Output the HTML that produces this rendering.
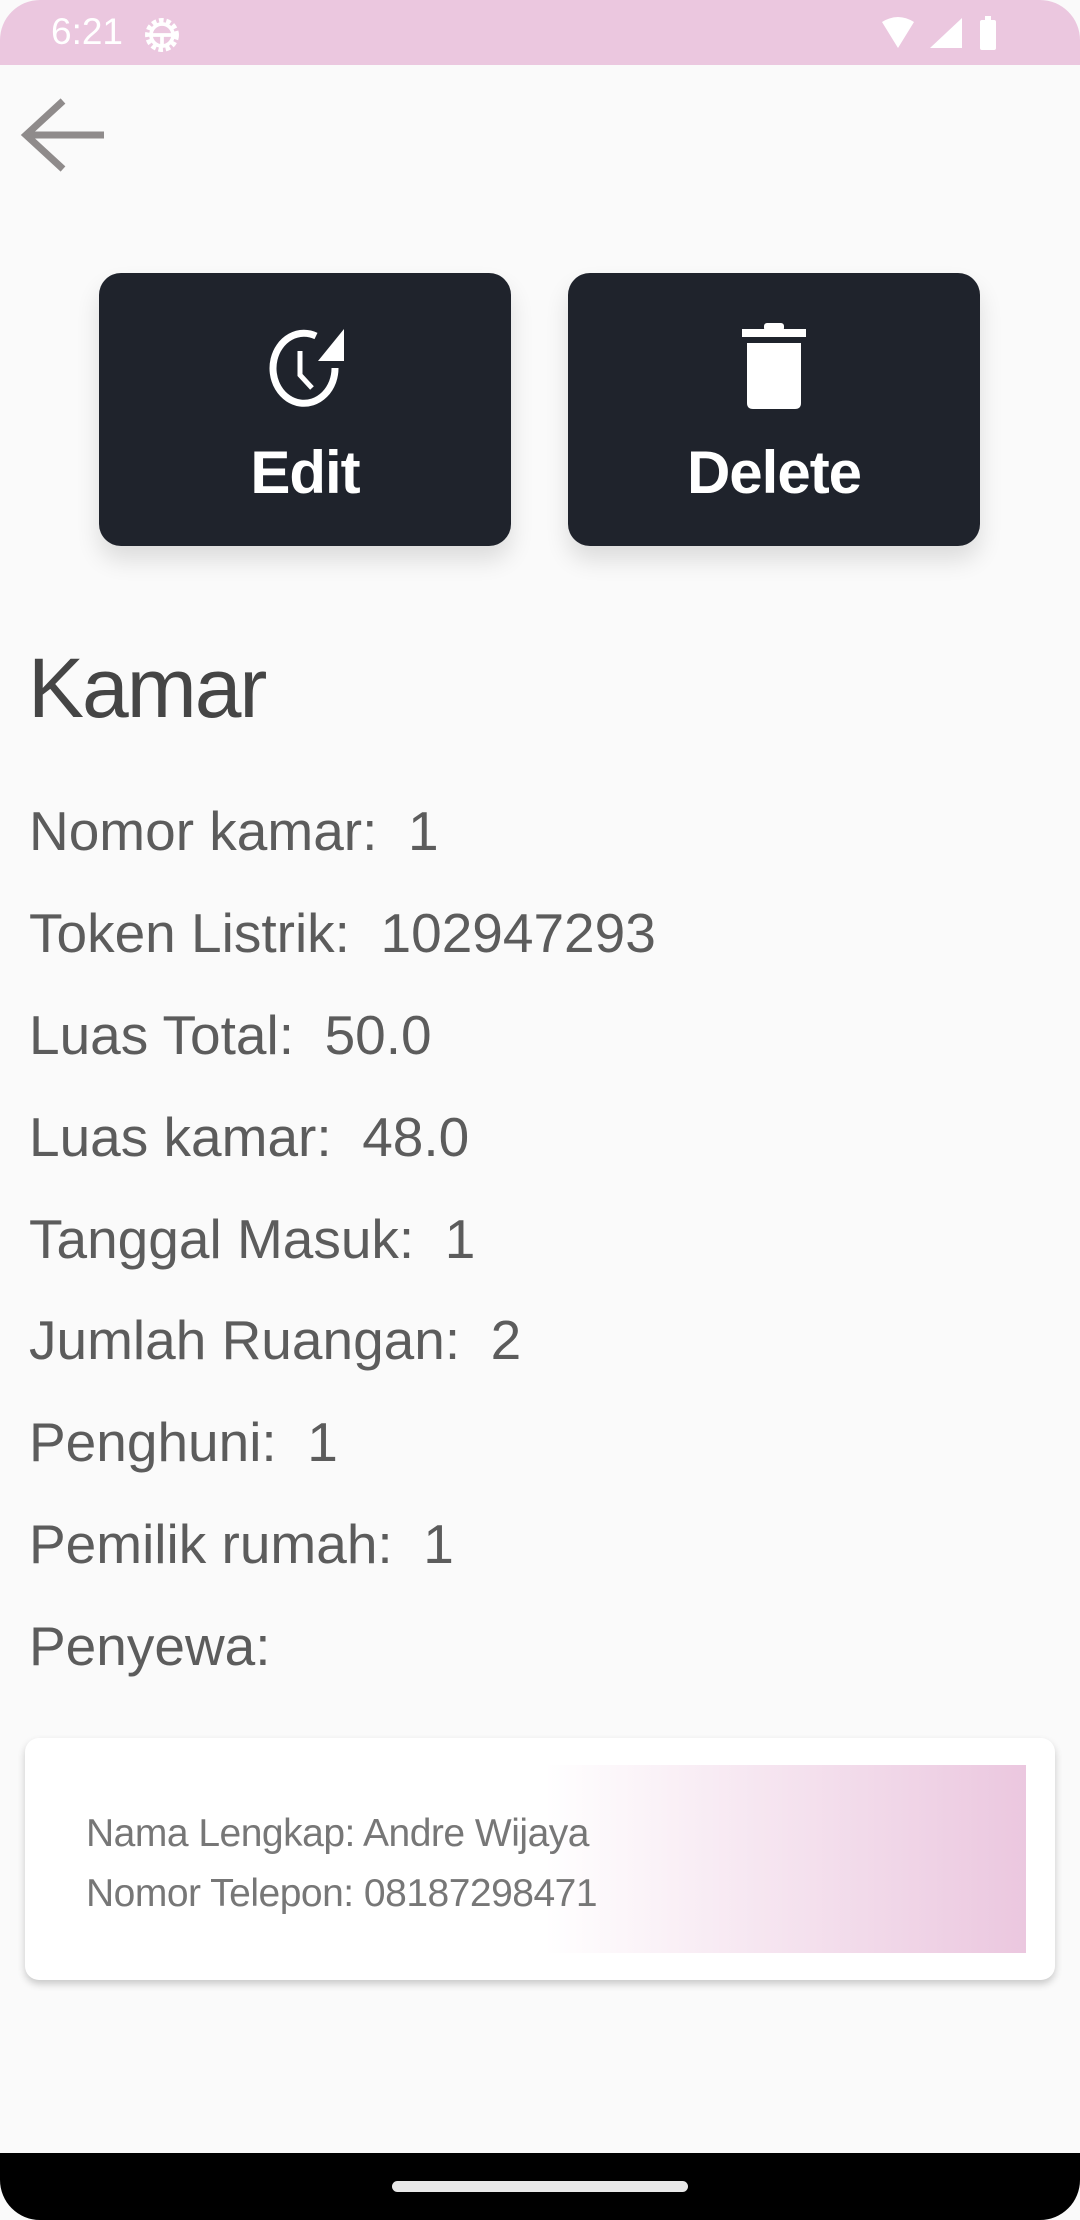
<!DOCTYPE html>
<html><head><meta charset="utf-8"><style>
*{margin:0;padding:0;box-sizing:border-box}
html,body{width:1080px;height:2220px;overflow:hidden;background:#fafafa;font-family:"Liberation Sans",sans-serif;position:relative}
.sb{position:absolute;left:0;top:0;width:1080px;height:65px;background:#ebc7df;border-radius:40px 40px 0 0}
.t{position:absolute;left:51px;top:11px;color:#fff;font-size:37px}
.btn{position:absolute;top:273px;width:412px;height:273px;background:#1f232c;border-radius:22px;box-shadow:0 14px 24px rgba(0,0,0,.12);color:#fff;text-align:center}
.btn span{position:absolute;left:0;right:0;top:165px;font-size:60px;font-weight:bold;letter-spacing:-1px}
.btn svg{position:absolute;left:50%;top:50px;transform:translateX(-50%)}
h1{position:absolute;left:28px;top:640px;font-size:84px;font-weight:normal;color:#454545;letter-spacing:-2px}
.r{position:absolute;left:29px;font-size:55px;color:#5c5c5c;line-height:60px;white-space:pre}
.card{position:absolute;left:25px;top:1738px;width:1030px;height:242px;background:#fff;border-radius:14px;box-shadow:0 4px 8px rgba(0,0,0,.2)}
.g{position:absolute;left:520px;top:27px;width:481px;height:188px;background:linear-gradient(90deg,rgba(235,199,223,0),rgba(235,199,223,.3) 30%,#ebc7df)}
.c{position:absolute;left:61px;font-size:39px;color:#777;letter-spacing:-0.5px}
.nav{position:absolute;left:0;top:2153px;width:1080px;height:67px;background:#000;border-radius:0 0 40px 40px}
.h{position:absolute;left:392px;top:28px;width:296px;height:11px;border-radius:6px;background:#e8e8e8}
</style></head><body>
<div class="sb"><div class="t">6:21</div>
<svg style="position:absolute;left:140px;top:13px" width="44" height="44" viewBox="0 0 24 24"><circle cx="12" cy="12" r="8" fill="none" stroke="#fff" stroke-width="2.5" stroke-dasharray="2.5 1.5"/><circle cx="12" cy="12" r="6" fill="none" stroke="#fff" stroke-width="2"/><path d="M6 12h12M12 12v6" stroke="#fff" stroke-width="2"/></svg>
<svg style="position:absolute;left:880px;top:16px" width="120" height="34" viewBox="0 0 120 34"><path d="M2 6Q18-4 34 6L18 32Z" fill="#fff"/><path d="M82 2V32H50Z" fill="#fff"/><rect x="100" y="4" width="16" height="30" rx="2" fill="#fff"/><rect x="105" y="0" width="6" height="5" fill="#fff"/></svg>
</div>
<svg style="position:absolute;left:20px;top:98px" width="86" height="74" viewBox="0 0 86 74"><path d="M43 3L6 37L43 71M6 37H84" fill="none" stroke="#8f8b8b" stroke-width="7"/></svg>
<div class="btn" style="left:99px"><svg width="90" height="90" viewBox="0 0 90 90"><path d="M75 45A31 35 0 1 1 56 13" fill="none" stroke="#fff" stroke-width="7"/><path d="M84 6V38H58Z" fill="#fff"/><path d="M40 28V52L52 65" fill="none" stroke="#fff" stroke-width="5"/></svg><span>Edit</span></div>
<div class="btn" style="left:568px"><svg width="70" height="90" viewBox="0 0 70 90"><rect x="3" y="6" width="64" height="8" fill="#fff"/><rect x="25" y="0" width="20" height="8" rx="3" fill="#fff"/><path d="M8 20H62V80Q62 86 56 86H14Q8 86 8 80Z" fill="#fff"/></svg><span>Delete</span></div>
<h1>Kamar</h1>
<div class="r" style="top:801px">Nomor kamar:  1</div>
<div class="r" style="top:903px">Token Listrik:  102947293</div>
<div class="r" style="top:1005px">Luas Total:  50.0</div>
<div class="r" style="top:1107px">Luas kamar:  48.0</div>
<div class="r" style="top:1209px">Tanggal Masuk:  1</div>
<div class="r" style="top:1310px">Jumlah Ruangan:  2</div>
<div class="r" style="top:1412px">Penghuni:  1</div>
<div class="r" style="top:1514px">Pemilik rumah:  1</div>
<div class="r" style="top:1616px">Penyewa:</div>
<div class="card"><div class="g"></div>
<div class="c" style="top:74px">Nama Lengkap: Andre Wijaya</div>
<div class="c" style="top:134px">Nomor Telepon: 08187298471</div></div>
<div class="nav"><div class="h"></div></div>
</body></html>
